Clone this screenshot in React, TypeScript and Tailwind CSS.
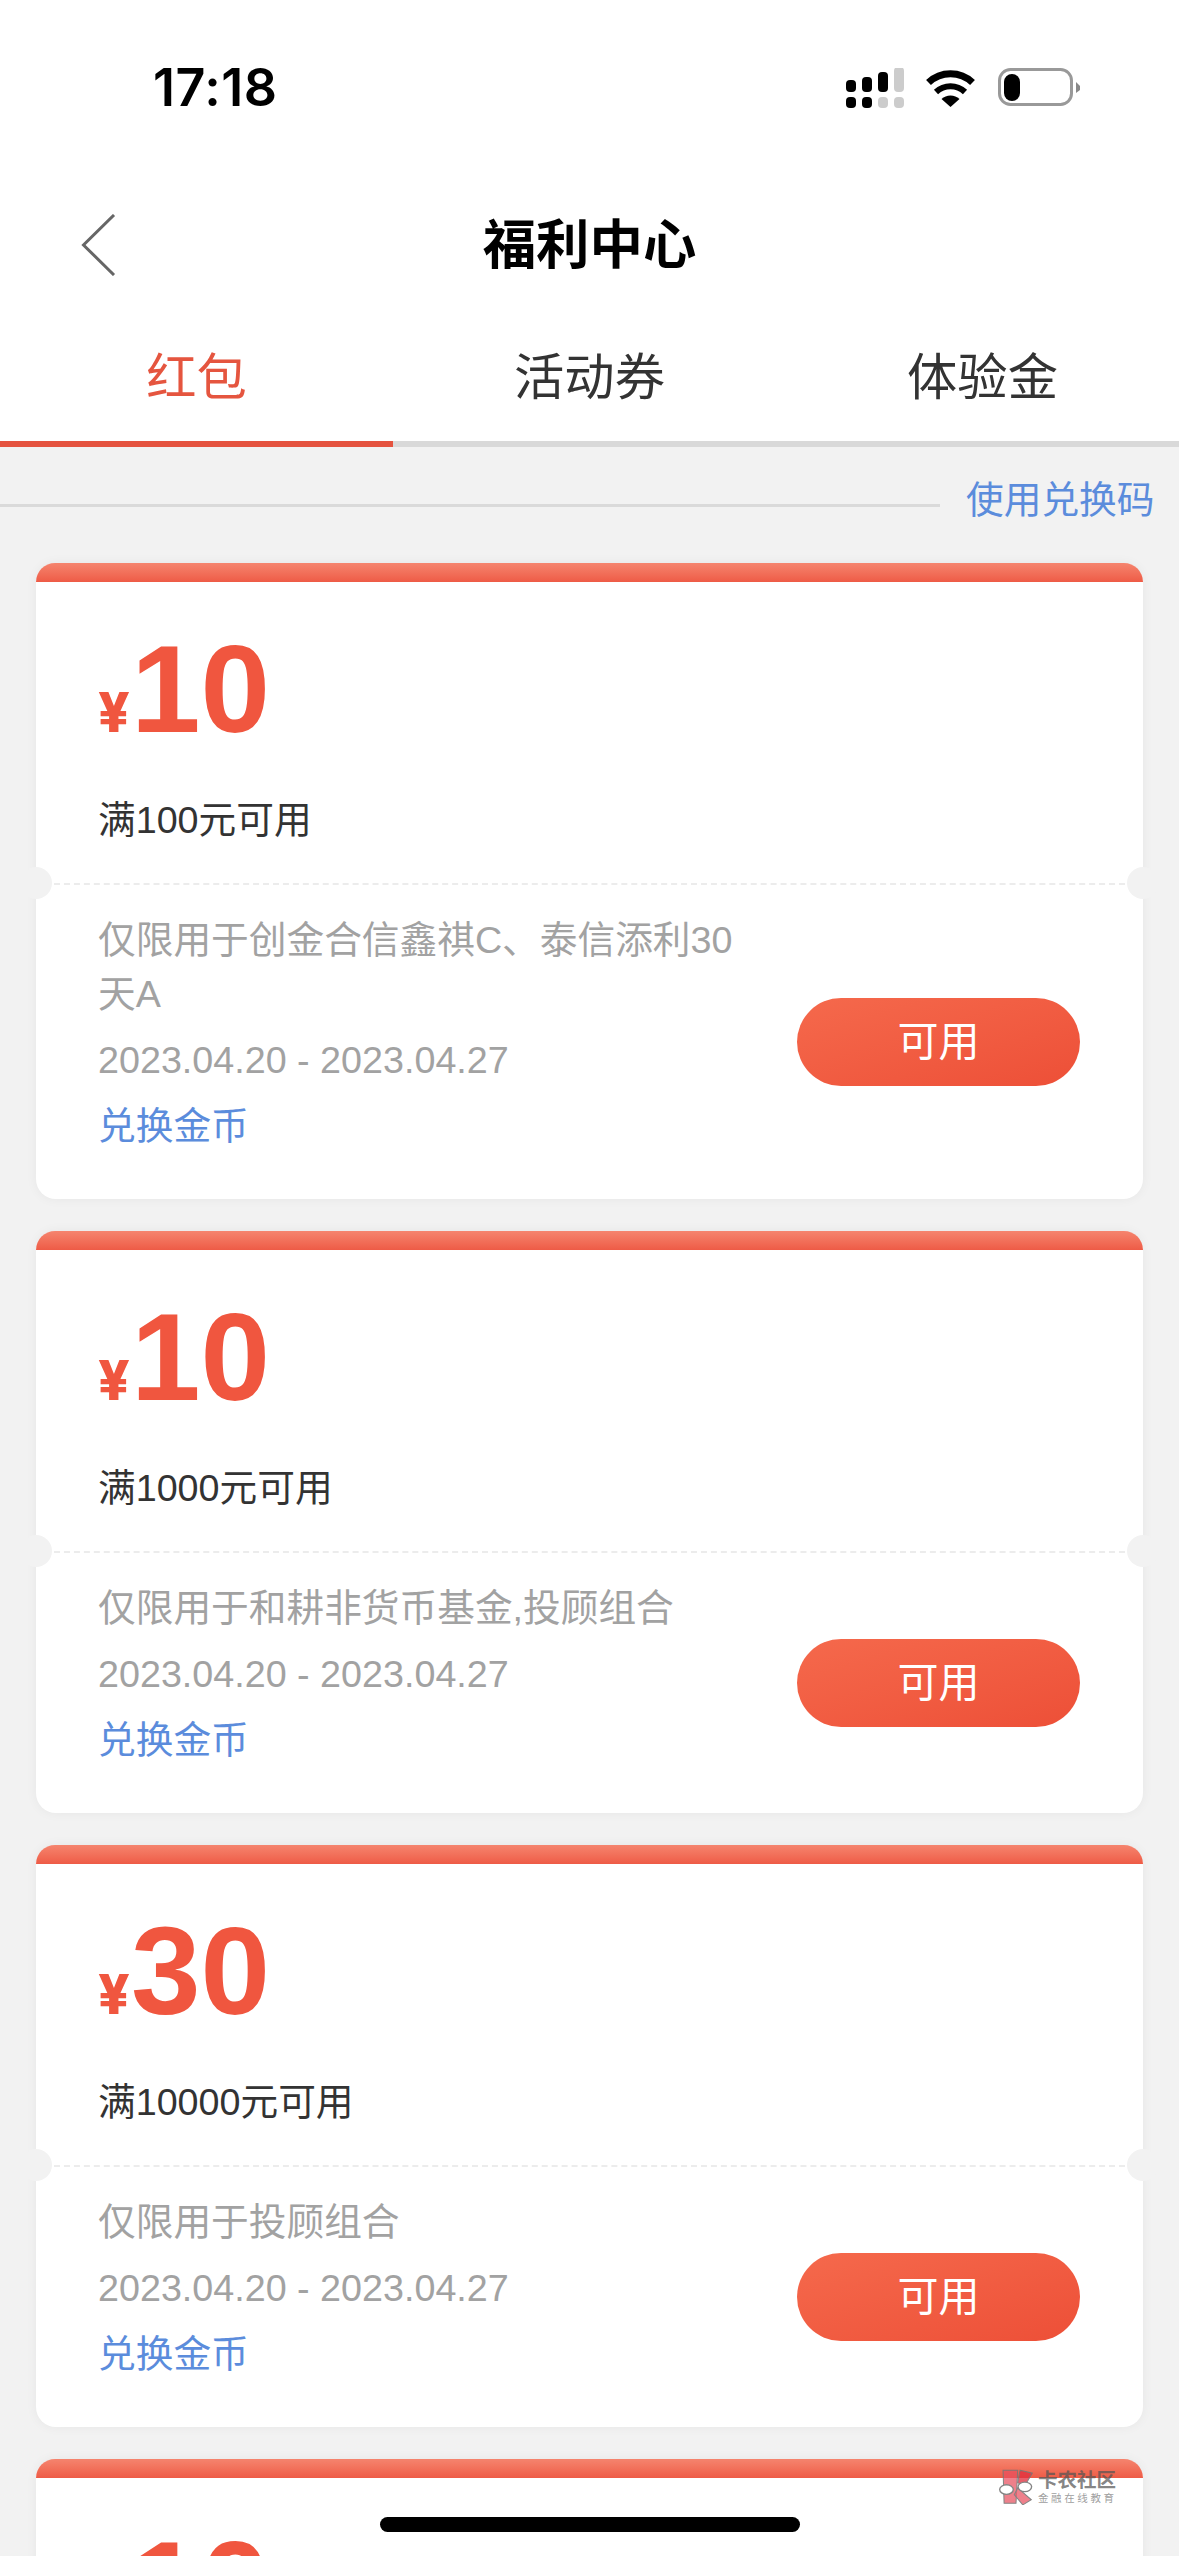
import React from "react";

const font = "font-['Liberation_Sans','Noto_Sans_CJK_SC',sans-serif]";

function StatusIcons() {
  return (
    <svg width="236" height="40" viewBox="0 0 236 40" className="block">
      {/* signal */}
      <rect x="1" y="12" width="10" height="12" rx="4" fill="#000" />
      <rect x="17" y="9" width="10" height="15" rx="4" fill="#000" />
      <rect x="33" y="4" width="10" height="20" rx="4" fill="#000" />
      <rect x="49" y="-1" width="10" height="25" rx="4" fill="#ccc" />
      <rect x="1" y="29" width="10" height="11" rx="4" fill="#000" />
      <rect x="17" y="29" width="10" height="11" rx="4" fill="#000" />
      <rect x="33" y="29" width="10" height="11" rx="4" fill="#ccc" />
      <rect x="49" y="29" width="10" height="11" rx="4" fill="#ccc" />
      {/* wifi */}
      <g transform="translate(80 1)">
        <path d="M3.5 13.5 A32 32 0 0 1 47.5 13.5" fill="none" stroke="#000" strokeWidth="7" />
        <path d="M11 23 A21 21 0 0 1 40 23" fill="none" stroke="#000" strokeWidth="6" />
        <path d="M16.5 30 A13 13 0 0 1 34.5 30 L25.5 38 Z" fill="#000" />
      </g>
      {/* battery */}
      <rect x="154.5" y="1.5" width="72" height="35" rx="11" fill="none" stroke="#999" strokeWidth="3" />
      <rect x="159" y="6" width="16" height="27" rx="8" fill="#000" />
      <path d="M231 14 L235 18 L235 22 L231 25 Z" fill="#888" />
    </svg>
  );
}

function Watermark() {
  return (
    <div className={`absolute left-[999px] top-[2468px] flex items-center gap-[5px] opacity-90 ${font}`}>
      <svg width="34" height="36" viewBox="0 0 100 105" className="block">
        <path d="M12 3 L55 3 L50 100 L15 100 Z" fill="#e8505f" fillOpacity="0.8" stroke="#777" strokeWidth="3" />
        <path d="M62 3 L98 12 L75 50 L55 40 Z" fill="#e23040" fillOpacity="0.85" stroke="#777" strokeWidth="3" />
        <path d="M55 55 L95 90 L70 105 L45 75 Z" fill="#e8505f" fillOpacity="0.8" stroke="#777" strokeWidth="3" />
        <ellipse cx="22" cy="60" rx="20" ry="14" fill="#fff" stroke="#777" strokeWidth="4" />
        <ellipse cx="76" cy="52" rx="20" ry="14" fill="#fff" stroke="#777" strokeWidth="4" />
      </svg>
      <div className="flex flex-col">
        <span className="text-[19.5px] leading-[24px] font-bold text-[#555]/80 whitespace-nowrap">卡农社区</span>
        <span className="text-[10.5px] leading-[13px] tracking-[2.6px] text-[#888]/90 whitespace-nowrap">金融在线教育</span>
      </div>
    </div>
  );
}

function Coupon({ amount, min, desc }: { amount: string; min: string; desc: string }) {
  return (
    <div className="relative rounded-[20px] bg-white shadow-[0_0_12px_rgba(0,0,0,0.05)]">
      <div className="h-[19px] rounded-t-[20px] bg-gradient-to-b from-[#f5846e] to-[#ee5b46]" />
      <div className="px-[62px] pt-[45px] pb-[36px]">
        <div className="flex items-baseline h-[126px]">
          <span className="w-[33px] font-['Inter',sans-serif] text-[55px] leading-[126px] font-extrabold text-[#f0563f]">¥</span>
          <span className="-mt-[1px] text-[125px] leading-[126px] font-bold text-[#f0563f]">{amount}</span>
        </div>
        <div className="mt-[40px] text-[37.7px] leading-[54px] text-[#333]">{min}</div>
      </div>
      <div className="relative mx-[18px] -mb-[2px] border-t-2 border-dashed border-[#ececec]" />
      <div className="absolute left-[-16px] top-[304px] size-[32px] rounded-full bg-[#f2f2f2]" />
      <div className="absolute right-[-16px] top-[304px] size-[32px] rounded-full bg-[#f2f2f2]" />
      <div className="flex items-center justify-between pl-[62px] pr-[63px]">
        <div className="w-[650px] pt-[30px] pb-[46px]">
          <div className="text-[37.7px] leading-[54px] text-[#a2a2a2]">{desc}</div>
          <div className="mt-[12px] text-[37.7px] leading-[54px] text-[#a2a2a2]">2023.04.20 - 2023.04.27</div>
          <div className="mt-[12px] text-[37.7px] leading-[54px] text-[#5b8cdc]">兑换金币</div>
        </div>
        <div className="mt-[2px] flex h-[88px] w-[283px] items-center justify-center rounded-full bg-gradient-to-br from-[#f5694c] to-[#ed4f37] pt-[2px] text-[41px] text-white">
          可用
        </div>
      </div>
    </div>
  );
}

export default function App() {
  return (
    <div className={`relative h-[2556px] w-[1179px] overflow-hidden bg-[#f2f2f2] ${font}`}>
      <div className="bg-white">
        <div className="flex h-[176px] items-center justify-between pl-[153px] pr-[98px]">
          <span className="font-['Inter',sans-serif] text-[52px] font-semibold tracking-[0.5px] text-black">17:18</span>
          <StatusIcons />
        </div>
        <div className="relative flex h-[138px] items-center justify-center pt-[3px]">
          <svg width="36" height="62" viewBox="0 0 36 62" className="absolute left-[81px] top-[38px]">
            <path d="M33 1 L2.5 31 L33 61" fill="none" stroke="#666" strokeWidth="3" />
          </svg>
          <span className="text-[53.4px] font-bold text-black">福利中心</span>
        </div>
        <div className="grid h-[127px] grid-cols-3 items-center text-center text-[50.3px]">
          <span className="text-[#e5553f]">红包</span>
          <span className="text-[#333]">活动券</span>
          <span className="text-[#333]">体验金</span>
        </div>
        <div className="grid h-[6px] grid-cols-3 bg-[#d9d9d9]">
          <div className="bg-[#e5533f]" />
        </div>
      </div>
      <div className="flex h-[106px] items-center">
        <div className="mt-[10px] h-[3px] w-[940px] bg-[#dadada]" />
        <span className="ml-[26px] text-[37.7px] text-[#5b8cdc]">使用兑换码</span>
      </div>
      <div className="mx-[36px] mt-[10px] flex flex-col gap-[32px]">
        <Coupon amount="10" min="满100元可用" desc="仅限用于创金合信鑫祺C、泰信添利30天A" />
        <Coupon amount="10" min="满1000元可用" desc="仅限用于和耕非货币基金,投顾组合" />
        <Coupon amount="30" min="满10000元可用" desc="仅限用于投顾组合" />
        <Coupon amount="10" min="满100元可用" desc="仅限用于投顾组合" />
      </div>
      <Watermark />
      <div className="absolute bottom-[24px] left-[380px] h-[15px] w-[420px] rounded-full bg-black" />
    </div>
  );
}
